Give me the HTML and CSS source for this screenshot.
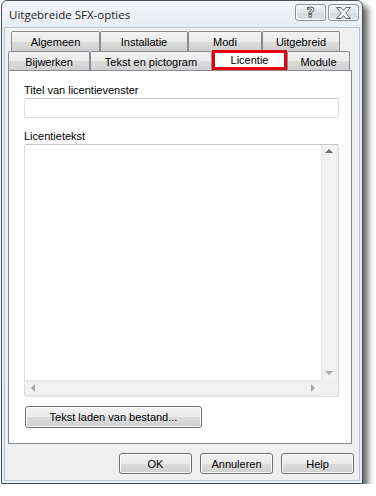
FILE: index.html
```html
<!DOCTYPE html>
<html lang="nl">
<head>
  <meta charset="UTF-8" />
  <title>Uitgebreide SFX-opties</title>
  <link rel="stylesheet" href="styles.css">
</head>
<body>
  <div class="window">
    <div class="titlebar">
      <span class="title">Uitgebreide SFX-opties</span>
      <div class="caption-buttons">
        <span class="cap-btn help-btn">?</span>
        <span class="cap-btn close-btn">
          <svg width="17" height="12" viewBox="0 0 17 12">
            <path d="M1.5 0.5h4.5l2.5 3 2.5-3h4.5l-4.8 5.5 4.8 5.5h-4.5l-2.5-3-2.5 3h-4.5l4.8-5.5z" fill="#fff" stroke="#5f636b" stroke-width="1"/>
          </svg>
        </span>
      </div>
    </div>

    <div class="client">
      <div class="tabs">
        <div class="tab-row back">
          <div class="tab t-alg">Algemeen</div>
          <div class="tab t-inst">Installatie</div>
          <div class="tab t-modi">Modi</div>
          <div class="tab t-uitg">Uitgebreid</div>
        </div>
        <div class="tab-row front">
          <div class="tab t-bijw">Bijwerken</div>
          <div class="tab t-tekst">Tekst en pictogram</div>
          <div class="tab t-lic selected">Licentie</div>
          <div class="tab t-mod">Module</div>
        </div>
      </div>

      <div class="panel">
        <label class="field-label">Titel van licentievenster</label>
        <div class="textbox"></div>

        <label class="field-label second">Licentietekst</label>
        <div class="memo">
          <div class="memo-text"></div>
          <div class="vscroll">
            <span class="arrow up"></span>
            <span class="arrow down"></span>
          </div>
          <div class="hscroll">
            <span class="arrow left"></span>
            <span class="arrow right"></span>
          </div>
          <div class="corner"></div>
        </div>

        <button class="btn load-btn">Tekst laden van bestand...</button>
      </div>

      <div class="dialog-buttons">
        <button class="btn">OK</button>
        <button class="btn">Annuleren</button>
        <button class="btn">Help</button>
      </div>
    </div>
  </div>
</body>
</html>
```

FILE: styles.css
```css
body {
  margin: 0;
  background: #fff;
  font-family: "Liberation Sans", Arial, sans-serif;
  font-size: 11px;
  color: #000;
}

.window {
  box-sizing: border-box;
  width: 362px;
  height: 484px;
  margin-left: 1px;
  border: 1px solid #4d4f55;
  border-radius: 6px 6px 0 0;
  background: linear-gradient(#f3f6fa, #e6ecf3 30px, #e9eef4);
  padding: 0 2px 2px 2px;
  display: flex;
  flex-direction: column;
  box-shadow: 5px 5px 6px rgba(0, 0, 0, 0.6);
}

/* title bar */
.titlebar {
  height: 26px;
  display: flex;
  align-items: flex-start;
  justify-content: space-between;
}

.title {
  font-family: "Open Sans", "Noto Sans", sans-serif;
  font-size: 11.5px;
  margin: 6px 0 0 5px;
  color: #1a1a1a;
}

.caption-buttons {
  display: flex;
  gap: 2px;
  margin: 3px 1px 0 0;
}

.cap-btn {
  box-sizing: border-box;
  width: 31px;
  height: 17px;
  border: 1px solid #8d929b;
  border-radius: 3px;
  background: linear-gradient(#f4f6f9, #dfe4ea 50%, #d3d9e1 51%, #dde3ea);
  display: flex;
  align-items: center;
  justify-content: center;
  box-shadow: inset 0 0 0 1px #fbfcfd;
}

.help-btn {
  font-family: "DejaVu Sans", sans-serif;
  font-weight: bold;
  font-size: 14px;
  color: #fff;
  -webkit-text-stroke: 1px #5f636b;
  line-height: 15px;
}

/* client area */
.client {
  flex: 1;
  border: 1px solid #b7c3d1;
  background: #f0f0f0;
  display: flex;
  flex-direction: column;
}

.tabs {
  margin: 3px 0 0 3px;
}

.tab-row {
  display: flex;
}

.tab-row.back {
  margin-left: 3px;
  height: 20px;
}

.tab-row.front {
  height: 19px;
}

.tab {
  box-sizing: border-box;
  border: 1px solid #898c95;
  border-bottom: none;
  border-radius: 2px 2px 0 0;
  background: linear-gradient(#f3f3f3, #ebebeb 50%, #dddddd 51%, #cfcfcf);
  display: flex;
  align-items: center;
  justify-content: center;
  padding-top: 1px;
}

.t-alg { width: 89px; }
.t-inst { width: 88px; }
.t-modi { width: 74px; }
.t-uitg { width: 78px; }

.t-bijw { width: 82px; }
.t-tekst { width: 122px; }
.t-lic { width: 75px; }
.t-mod { width: 63px; }

.tab.selected {
  background: #fff;
  border: 3px solid #e3000f;
  border-radius: 0;
  position: relative;
  z-index: 1;
  height: 20px;
  margin-top: -1px;
  padding-top: 0;
}

.panel {
  box-sizing: border-box;
  width: 344px;
  height: 374px;
  margin-left: 3px;
  border: 1px solid #898c95;
  background: #fff;
  padding: 13px 12px 0 15px;
  display: flex;
  flex-direction: column;
  align-items: flex-start;
}

.field-label {
  display: block;
  line-height: 13px;
  height: 13px;
  margin-bottom: 1px;
  color: #000;
}

.field-label.second {
  margin-top: 12px;
}

.textbox {
  box-sizing: border-box;
  width: 315px;
  height: 20px;
  border: 1px solid #dcdfe5;
  border-top-color: #c3c6cc;
  border-radius: 2px;
  background: #fff;
}

.memo {
  box-sizing: border-box;
  width: 315px;
  height: 253px;
  border: 1px solid #dcdfe5;
  border-top-color: #c3c6cc;
  border-radius: 2px;
  display: grid;
  grid-template-columns: 1fr 17px;
  grid-template-rows: 1fr 16px;
}

.memo-text {
  background: #fff;
}

.vscroll {
  background: linear-gradient(90deg, #e6e6e6, #f2f2f2 3px, #f2f2f2 14px, #e8e8e8);
  position: relative;
}

.hscroll {
  background: linear-gradient(#e6e6e6, #f2f2f2 3px, #f2f2f2 13px, #e8e8e8);
  position: relative;
}

.corner {
  background: #f0f0f0;
}

.arrow {
  position: absolute;
  width: 0;
  height: 0;
  border: 4px solid transparent;
}

.arrow.up {
  top: 4px;
  left: 4px;
  border-bottom-color: #6c6c6c;
  border-top: none;
}

.arrow.down {
  bottom: 5px;
  left: 4px;
  border-top-color: #a8a8a8;
  border-bottom: none;
}

.arrow.left {
  left: 6px;
  top: 4px;
  border-right-color: #a8a8a8;
  border-left: none;
}

.arrow.right {
  right: 6px;
  top: 4px;
  border-left-color: #a8a8a8;
  border-right: none;
}

/* buttons */
.btn {
  box-sizing: border-box;
  height: 21px;
  border: 1px solid #707070;
  border-radius: 3px;
  background: linear-gradient(#f2f2f2, #ebebeb 50%, #dddddd 51%, #cfcfcf);
  box-shadow: inset 0 0 0 1px #fcfcfc;
  font-family: "Liberation Sans", Arial, sans-serif;
  font-size: 11px;
  color: #000;
  padding: 0;
}

.load-btn {
  width: 177px;
  height: 22px;
  margin: 9px 0 0 1px;
}

.dialog-buttons {
  display: flex;
  justify-content: flex-end;
  gap: 8px;
  margin: 9px 5px 0 0;
}

.dialog-buttons .btn {
  width: 73px;
}
```
